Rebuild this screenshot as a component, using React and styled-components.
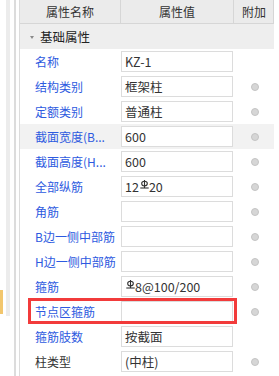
import React from "react";
import styled, { createGlobalStyle } from "styled-components";

const GlobalStyle = createGlobalStyle`
  html, body {
    margin: 0;
    padding: 0;
    background: #ffffff;
  }
  body {
    font-family: "Microsoft YaHei", "Noto Sans CJK SC", "Noto Sans", sans-serif;
    font-size: 12px;
    color: #333;
  }
`;

const Page = styled.div`
  display: flex;
  width: 279px;
  height: 376px;
  overflow: hidden;
  background: #fff;
`;

// thin strip on the left (splitter + scroll track)
const Rail = styled.div`
  display: flex;
  width: 20px;
  flex-shrink: 0;
  height: 100%;
`;
const RailEdge = styled.div`
  width: 6px;
  display: flex;
  flex-direction: column;
`;
const RailMark = styled.div`
  width: 3px;
  height: 24px;
  margin-top: 290px;
  background: #f2c66d;
`;
const RailTrack = styled.div`
  width: 4px;
  height: 316px;
  background: #ececec;
`;
const RailGap = styled.div`
  width: ${(p) => p.w}px;
`;
const RailLine = styled.div`
  width: ${(p) => p.w}px;
  height: 100%;
  background: #dcdcdc;
`;

const Table = styled.div`
  width: 254px;
  flex-shrink: 0;
  display: flex;
  flex-direction: column;
`;

const HeaderRow = styled.div`
  display: grid;
  grid-template-columns: 101px 113px 40px;
  height: 23px;
  background: #ebebeb;
  border-bottom: 1px solid #d6d6d6;
`;
const HeadCell = styled.div`
  display: flex;
  align-items: center;
  justify-content: center;
  border-right: 1px solid #d6d6d6;
  font-size: 12px;
  color: #333;
  padding-left: ${(p) => (p.shift ? 1 : 0)}px;
`;

const SectionRow = styled.div`
  display: flex;
  align-items: center;
  height: 25px;
  background: #eeeeee;
  padding-left: 10px;
  gap: 6px;
  font-size: 12.5px;
  color: #222;
`;
const Caret = styled.span`
  width: 0;
  height: 0;
  border-left: 2.5px solid transparent;
  border-right: 2.5px solid transparent;
  border-top: 3px solid #8a8a8a;
  margin-top: 1px;
`;

const Row = styled.div`
  position: relative;
  display: grid;
  grid-template-columns: 101px 113px 40px;
  height: 25px;
  align-items: center;
  background: ${(p) => (p.active ? "#f2f2f2" : "#fff")};
`;
const Label = styled.div`
  padding-left: 15px;
  font-size: 12px;
  color: ${(p) => (p.plain ? "#333" : "#2d5ae0")};
  white-space: nowrap;
  overflow: hidden;
`;
const ValueBox = styled.div`
  width: 112px;
  height: 21px;
  box-sizing: border-box;
  border: 1px solid #dcdcdc;
  background: #fff;
  display: flex;
  align-items: center;
  padding-left: 3px;
  font-size: 12.5px;
  color: #333;
  white-space: nowrap;
`;
const Attach = styled.div`
  display: flex;
  justify-content: center;
  padding-left: 1px;
`;
const Dot = styled.span`
  width: 8px;
  height: 8px;
  box-sizing: border-box;
  border-radius: 50%;
  background: #d6d6d6;
  border: 1px solid #c4c4c4;
`;
const Highlight = styled.div`
  position: absolute;
  left: 8px;
  top: -1px;
  width: 209px;
  height: 26px;
  box-sizing: border-box;
  border: 3px solid #f23b3b;
  pointer-events: none;
`;

const Sym = styled.svg`
  width: 9px;
  height: 9px;
  margin: 0 0 5px 1px;
  flex-shrink: 0;
`;

// 钢筋等级符号
const Rebar = () => (
  <Sym viewBox="0 0 9 9">
    <ellipse cx="4.5" cy="3.6" rx="2.8" ry="2.3" fill="none" stroke="#333" strokeWidth="1.1" />
    <line x1="4.5" y1="0" x2="4.5" y2="8" stroke="#333" strokeWidth="1.1" />
    <line x1="0.3" y1="8" x2="8.7" y2="8" stroke="#333" strokeWidth="1.1" />
  </Sym>
);

const rows = [
  { name: "名称", value: "KZ-1" },
  { name: "结构类别", value: "框架柱", dot: true },
  { name: "定额类别", value: "普通柱", dot: true },
  { name: "截面宽度(B...", value: "600", dot: true, active: true },
  { name: "截面高度(H...", value: "600", dot: true },
  { name: "全部纵筋", value: ["12", "sym", "20"], dot: true },
  { name: "角筋", value: "", dot: true },
  { name: "B边一侧中部筋", value: "", dot: true },
  { name: "H边一侧中部筋", value: "", dot: true },
  { name: "箍筋", value: ["sym", "8@100/200"], dot: true },
  { name: "节点区箍筋", value: "", dot: true, mark: true },
  { name: "箍筋肢数", value: "按截面" },
  { name: "柱类型", value: "(中柱)", dot: true, plain: true },
];

const renderValue = (v) => {
  if (!Array.isArray(v)) return v;
  return v.map((part, i) => (part === "sym" ? <Rebar key={i} /> : <span key={i}>{part}</span>));
};

const App = () => {
  return (
    <>
      <GlobalStyle />
      <Page>
        <Rail>
          <RailEdge>
            <RailMark />
          </RailEdge>
          <RailTrack />
          <RailGap w={4} />
          <RailLine w={2} />
          <RailGap w={3} />
          <RailLine w={1} />
        </Rail>
        <Table>
          <HeaderRow>
            <HeadCell>属性名称</HeadCell>
            <HeadCell>属性值</HeadCell>
            <HeadCell shift>附加</HeadCell>
          </HeaderRow>
          <SectionRow>
            <Caret />
            基础属性
          </SectionRow>
          {rows.map((r, index) => (
            <Row key={index} active={r.active}>
              <Label plain={r.plain}>{r.name}</Label>
              <ValueBox>{renderValue(r.value)}</ValueBox>
              <Attach>{r.dot && <Dot />}</Attach>
              {r.mark && <Highlight />}
            </Row>
          ))}
        </Table>
      </Page>
    </>
  );
};

export default App;
